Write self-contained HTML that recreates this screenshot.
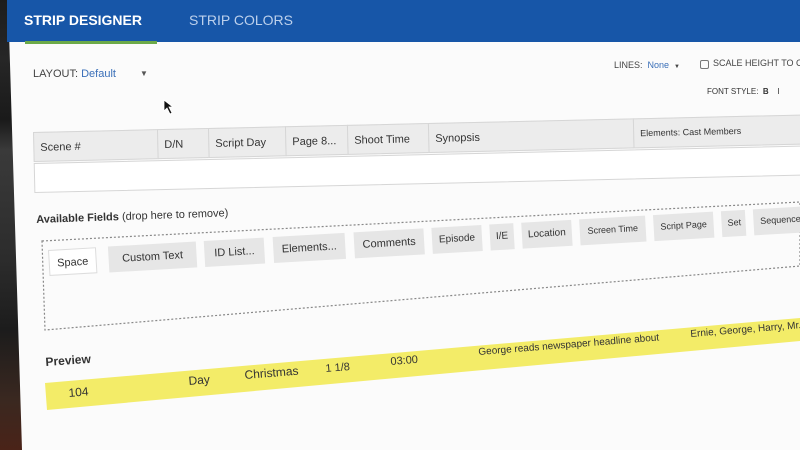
<!DOCTYPE html>
<html><head><meta charset="utf-8"><style>
*{margin:0;padding:0;box-sizing:border-box}
body{width:800px;height:450px;overflow:hidden;background:#fbfbfb;font-family:"Liberation Sans",Arial,sans-serif;position:relative;color:#333}
.a{position:absolute;white-space:nowrap}
.left{position:absolute;left:0;top:0;width:30px;height:450px;background:linear-gradient(#1d1d1d 0,#262626 60px,#1a1a1a 120px,#3a3a3a 150px,#2c2c2c 260px,#1c1c1c 330px,#3a2820 400px,#4a2318 450px);clip-path:polygon(0 0,8px 0,22px 450px,0 450px)}
.hdr{position:absolute;left:7px;top:0;width:800px;height:42px;background:#1756a8}
.th{position:absolute;top:0;height:30px;background:#ececec;border:1px solid #d6d6d6;font-size:11px;padding:9px 6px;color:#333}
.chip{position:absolute;top:0;height:26px;background:#e6e6e6;font-size:11px;padding:7px 6px;color:#333;text-align:center}
</style></head><body>
<div class="left"></div>
<div class="hdr"></div>
<div class="a" style="left:24px;top:12px;color:#fff;font-weight:bold;font-size:14px">STRIP DESIGNER</div>
<div class="a" style="left:189px;top:12px;color:#bcd0ec;font-size:14px">STRIP COLORS</div>
<div class="a" style="left:25px;top:41px;width:132px;height:3px;background:#6caa48"></div>

<div class="a" style="left:33px;top:68px;font-size:11px;color:#444">LAYOUT: <span style="color:#3a6fb8">Default</span></div>
<div class="a" style="left:140px;top:69px;font-size:8px;color:#555">▼</div>
<svg class="a" style="left:163px;top:99px" width="12" height="16"><path d="M1 1 L1 12 L4 9 L7 15 L9 14 L6 8 L10 8 Z" fill="#111" stroke="#fff" stroke-width=".8"/></svg>

<div class="a" style="left:614px;top:60px;font-size:9px;color:#444">LINES: &nbsp;<span style="color:#3a6fb8">None</span> &nbsp;<span style="font-size:6px">▼</span></div>
<div class="a" style="left:700px;top:60px;width:9px;height:9px;border:1px solid #777;border-radius:2px"></div>
<div class="a" style="left:713px;top:58px;font-size:9px;color:#444">SCALE HEIGHT TO C</div>
<div class="a" style="left:707px;top:87px;font-size:8px;color:#333">FONT STYLE: &nbsp;<b>B</b> &nbsp; &nbsp;I</div>

<div class="a" style="left:33px;top:132px;width:800px;height:62px;transform:rotate(-1.3deg);transform-origin:0 0">
 <div class="th" style="left:0;width:125px">Scene #</div>
 <div class="th" style="left:124px;width:52px">D/N</div>
 <div class="th" style="left:175px;width:78px">Script Day</div>
 <div class="th" style="left:252px;width:63px">Page 8...</div>
 <div class="th" style="left:314px;width:82px">Shoot Time</div>
 <div class="th" style="left:395px;width:206px">Synopsis</div>
 <div class="th" style="left:600px;width:200px;font-size:9px">Elements: Cast Members</div>
 <div class="a" style="left:0;top:31px;width:800px;height:30px;background:#fff;border:1px solid #d6d6d6"></div>
</div>

<div class="a" style="left:36px;top:214px;font-size:11px;transform:rotate(-2deg);transform-origin:0 0"><b>Available Fields</b> (drop here to remove)</div>
<svg class="a" style="left:0;top:0" width="800" height="450"><polygon points="42,241 800,202 800,266 45,330" fill="none" stroke="#888" stroke-width="1.2" stroke-dasharray="2,2"/>
<polygon points="45,383 800,318 800,341 47,410" fill="#f3ec68"/></svg>

<div class="a" style="left:48px;top:250px;width:760px;height:30px;transform:rotate(-3.3deg);transform-origin:0 0">
 <div class="chip" style="left:0;width:48px;background:#fff;border:1px solid #ddd">Space</div>
 <div class="chip" style="left:60px;width:88px">Custom Text</div>
 <div class="chip" style="left:156px;width:60px">ID List...</div>
 <div class="chip" style="left:225px;width:72px">Elements...</div>
 <div class="chip" style="left:306px;width:70px">Comments</div>
 <div class="chip" style="left:384px;width:50px;font-size:10px">Episode</div>
 <div class="chip" style="left:442px;width:24px;font-size:10px">I/E</div>
 <div class="chip" style="left:474px;width:50px;font-size:10px">Location</div>
 <div class="chip" style="left:532px;width:66px;font-size:9px">Screen Time</div>
 <div class="chip" style="left:606px;width:60px;font-size:9px">Script Page</div>
 <div class="chip" style="left:674px;width:24px;font-size:9px">Set</div>
 <div class="chip" style="left:706px;width:54px;font-size:9px">Sequence</div>
</div>

<div class="a" style="left:45px;top:355px;font-size:12px;font-weight:bold;transform:rotate(-4deg);transform-origin:0 0">Preview</div>
<div class="a" style="left:68px;top:386px;font-size:12px;transform:rotate(-4.6deg);transform-origin:0 0">104</div>
<div class="a" style="left:188px;top:374px;font-size:12px;transform:rotate(-4.6deg);transform-origin:0 0">Day</div>
<div class="a" style="left:244px;top:368px;font-size:12px;transform:rotate(-4.6deg);transform-origin:0 0">Christmas</div>
<div class="a" style="left:325px;top:363px;font-size:11px;transform:rotate(-4.6deg);transform-origin:0 0">1 1/8</div>
<div class="a" style="left:390px;top:356px;font-size:11px;transform:rotate(-4.6deg);transform-origin:0 0">03:00</div>
<div class="a" style="left:478px;top:347px;font-size:10px;transform:rotate(-4.6deg);transform-origin:0 0">George reads newspaper headline about</div>
<div class="a" style="left:690px;top:329px;font-size:10px;transform:rotate(-4.6deg);transform-origin:0 0">Ernie, George, Harry, Mr.</div>
</body></html>
